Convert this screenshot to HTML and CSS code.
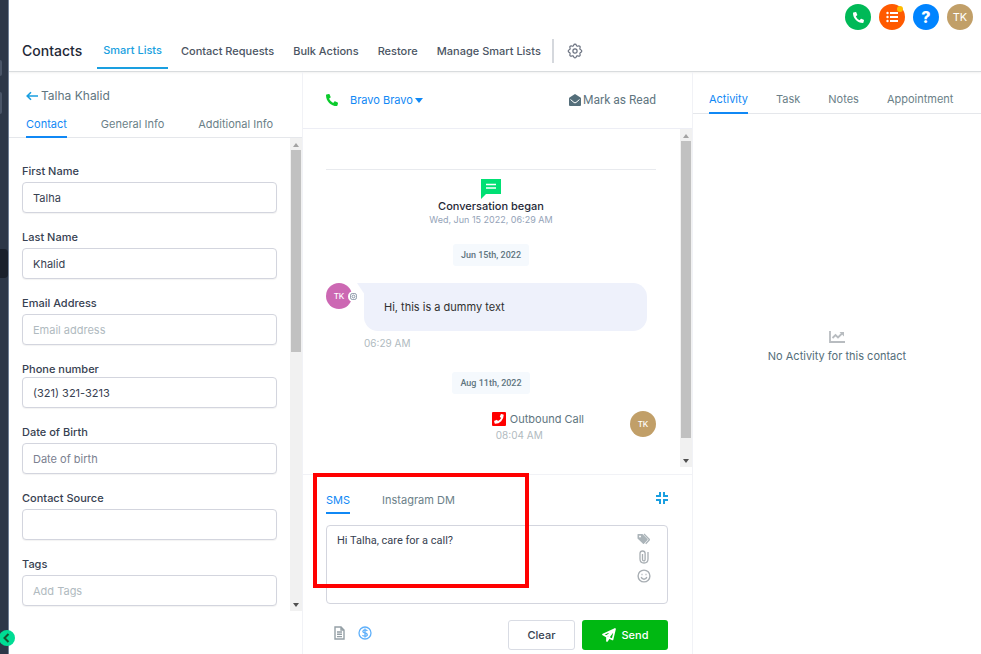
FILE: index.html
```
<!DOCTYPE html>
<html lang="en">
<head>
  <meta charset="UTF-8" />
  <meta name="viewport" content="width=device-width, initial-scale=1.0" />
  <title>Contacts</title>
  <link rel="stylesheet" href="styles.css">
</head>
<body>
  <aside class="sidebar">
    <span class="side-avatar"></span>
    <span class="side-search"></span>
    <span class="side-active"></span>
    <button class="side-toggle" aria-label="Toggle sidebar">
      <svg viewBox="0 0 16 16" width="16" height="16"><path d="M9.500 4 5.500 8l4 4" fill="none" stroke="#14532d" stroke-width="2"/></svg>
    </button>
  </aside>

  <div class="app">
    <header class="header">
      <div class="top-icons">
        <button class="circle green" aria-label="Call">
          <svg viewBox="0 0 512 512" width="11" height="11"><path fill="#fff" d="M497.390 361.800l-112-48a24 24 0 0 0-28 6.900l-49.600 60.600A370.660 370.660 0 0 1 130.600 204.110l60.600-49.600a23.940 23.940 0 0 0 6.900-28l-48-112A24.160 24.160 0 0 0 122.600.61l-104 24A24 24 0 0 0 0 48c0 256.500 207.900 464 464 464a24 24 0 0 0 23.400-18.600l24-104a24.290 24.290 0 0 0-14.010-27.600z"/></svg>
        </button>
        <button class="circle orange" aria-label="Tasks">
          <svg viewBox="0 0 14 12" width="14" height="12" fill="#fff"><circle cx="2.500" cy="2" r="1.200"/><circle cx="2.500" cy="6" r="1.200"/><circle cx="2.500" cy="10" r="1.200"/><path d="M5 1h8v2H5zM5 5h8v2H5zM5 9h8v2H5z"/></svg>
          <span class="dot"></span>
        </button>
        <button class="circle blue" aria-label="Help">?</button>
        <button class="circle tan">TK</button>
      </div>
      <nav class="main-nav">
        <h1>Contacts</h1>
        <a href="#" class="active">Smart Lists</a>
        <a href="#">Contact Requests</a>
        <a href="#">Bulk Actions</a>
        <a href="#">Restore</a>
        <a href="#">Manage Smart Lists</a>
        <button class="settings" aria-label="Settings">
          <svg viewBox="0 0 24 24" width="18" height="18" fill="none" stroke="#6b7280" stroke-width="1.600" stroke-linejoin="round"><path d="M10.300 4.300c.4-1.800 3-1.800 3.400 0a1.700 1.700 0 0 0 2.600 1.100c1.500-1 3.300.8 2.400 2.400a1.700 1.700 0 0 0 1 2.500c1.800.5 1.800 3 0 3.500a1.700 1.700 0 0 0-1 2.500c.9 1.600-.9 3.300-2.400 2.400a1.700 1.700 0 0 0-2.600 1c-.4 1.800-3 1.800-3.400 0a1.700 1.700 0 0 0-2.600-1c-1.500.9-3.300-.8-2.400-2.400a1.700 1.700 0 0 0-1-2.500c-1.800-.5-1.800-3 0-3.500a1.700 1.700 0 0 0 1-2.500c-.9-1.600.9-3.400 2.400-2.400a1.700 1.700 0 0 0 2.600-1.100z"/><circle cx="12" cy="12" r="2.800"/></svg>
        </button>
      </nav>
    </header>

    <main class="columns">
      <section class="contact">
        <div class="contact-head">
          <a href="#" class="back">
            <svg viewBox="0 0 12 10" width="12" height="10"><path d="M12 5H1.500M5 1.200 1.200 5 5 8.800" fill="none" stroke="#1a9fe0" stroke-width="1.600"/></svg>
            <span>Talha Khalid</span>
          </a>
          <nav class="tabs contact-tabs">
            <a href="#" class="active">Contact</a>
            <a href="#">General Info</a>
            <a href="#">Additional Info</a>
          </nav>
        </div>
        <div class="contact-body">
          <form class="fields">
            <div class="field"><label for="first">First Name</label><input id="first" type="text" value="Talha"></div>
            <div class="field"><label for="last">Last Name</label><input id="last" type="text" value="Khalid"></div>
            <div class="field"><label for="email">Email Address</label><input id="email" type="email" placeholder="Email address"></div>
            <div class="field tight"><label for="phone">Phone number</label><input id="phone" type="tel" value="(321) 321-3213"></div>
            <div class="field dark"><label for="dob">Date of Birth</label><input id="dob" type="text" placeholder="Date of birth"></div>
            <div class="field"><label for="source">Contact Source</label><input id="source" type="text"></div>
            <div class="field"><label for="tags">Tags</label><input id="tags" type="text" placeholder="Add Tags"></div>
          </form>
          <div class="scrollbar"><i class="up"></i><b class="thumb-form"></b><i class="down"></i></div>
        </div>
      </section>

      <section class="conversation">
        <div class="conv-head">
          <svg viewBox="0 0 512 512" width="12" height="12"><path fill="#0acb2c" d="M497.390 361.800l-112-48a24 24 0 0 0-28 6.900l-49.600 60.600A370.660 370.660 0 0 1 130.600 204.110l60.600-49.600a23.940 23.940 0 0 0 6.900-28l-48-112A24.160 24.160 0 0 0 122.600.61l-104 24A24 24 0 0 0 0 48c0 256.500 207.900 464 464 464a24 24 0 0 0 23.400-18.600l24-104a24.290 24.290 0 0 0-14.010-27.600z"/></svg>
          <button class="person">Bravo Bravo <span class="caret"></span></button>
          <button class="mark-read">
            <svg viewBox="0 0 12 12" width="12" height="12"><path fill="#546e7a" d="M6 0 .5 3.600Q0 4 0 4.500V11q0 1 1 1h10q1 0 1-1V4.500q0-.5-.5-.9z"/><path d="m1.500 5.500 3.500 3q1 .7 2 0l3.500-3" fill="none" stroke="#fff"/></svg>
            Mark as Read
          </button>
        </div>

        <div class="thread-wrap">
          <div class="thread">
            <hr>
            <div class="began">
              <svg viewBox="0 0 20 20" width="20" height="20"><path fill="#00e074" d="M0 0h20v15H5l-5 5z"/><path d="M5 5.500h10M5 9h10" stroke="#fff" stroke-width="1.400"/></svg>
              <strong>Conversation began</strong>
              <time>Wed, Jun 15 2022, 06:29 AM</time>
            </div>
            <span class="date">Jun 15th, 2022</span>
            <div class="incoming">
              <div class="avatar pink">TK
                <span class="channel"><svg viewBox="0 0 10 10" width="7" height="7" fill="none" stroke="#64748b"><rect x=".8" y=".8" width="8.400" height="8.400" rx="2.400"/><circle cx="5" cy="5" r="2"/></svg></span>
              </div>
              <div class="bubble-wrap">
                <p class="bubble">Hi, this is a dummy text</p>
                <time>06:29 AM</time>
              </div>
            </div>
            <span class="date second">Aug 11th, 2022</span>
            <div class="outgoing">
              <div class="call">
                <p>
                  <svg viewBox="0 0 14 14" width="14" height="14"><rect width="14" height="14" rx="1" fill="red"/><path fill="#fff" d="m9.300 2.100 2 .5q.4.100.4.500 0 3.600-2.500 6.100T3.100 11.700q-.4 0-.5-.4l-.5-2q0-.4.300-.5l2.200-.9q.3-.1.500.1l.9 1.100q2.200-1 3.100-3.100L8 5.100q-.3-.3-.1-.6l.9-2.200q.2-.3.500-.2z"/></svg>
                  Outbound Call
                </p>
                <time>08:04 AM</time>
              </div>
              <div class="avatar tan">TK</div>
            </div>
          </div>
          <div class="scrollbar"><i class="up"></i><b class="thumb-thread"></b><i class="down"></i></div>
        </div>

        <div class="composer">
          <div class="composer-top">
            <nav class="tabs composer-tabs">
              <a href="#" class="active">SMS</a>
              <a href="#">Instagram DM</a>
            </nav>
            <button class="icon-btn" aria-label="Collapse">
              <svg viewBox="0 0 12 12" width="12" height="12"><path d="M0 4h4V0M8 0v4h4M12 8H8v4M4 12V8H0" fill="none" stroke="#1a9fe0" stroke-width="2"/></svg>
            </button>
          </div>
          <div class="message-box">
            <textarea aria-label="Message">Hi Talha, care for a call?</textarea>
            <div class="tools">
              <button class="icon-btn" aria-label="Tags"><svg viewBox="0 0 14 12" width="14" height="12" fill="#abb4b9"><path d="M1 1h4.500l5 5q.5.500 0 1l-3.500 3.700q-.5.500-1 0L.5 5.500V1.500Q.5 1 1 1z"/><path d="m7 1 5.200 5.200q.4.400 0 .8l-3.500 3.700" fill="none" stroke="#abb4b9" stroke-width="1.300"/><circle cx="3" cy="3.500" r="1" fill="#fff"/></svg></button>
              <button class="icon-btn" aria-label="Attach"><svg viewBox="0 0 10 14" width="10" height="14" fill="none" stroke="#a8aeb3" stroke-width="1.300"><path d="M3.500 4v5.500q0 1.300 1.300 1.300T6.100 9.500V3.300Q6.100 1 3.600 1T1 3.300V9q0 4 4 4t4-4V2"/></svg></button>
              <button class="icon-btn" aria-label="Emoji"><svg viewBox="0 0 14 14" width="14" height="14" fill="none" stroke="#a8aeb3" stroke-width="1.400"><circle cx="7" cy="7" r="5.900"/><path d="M4.200 8q.6 2.200 2.800 2.200T9.800 8M4.500 5.500h1M8.500 5.500h1"/></svg></button>
            </div>
          </div>
          <div class="actions">
            <button class="icon-btn" aria-label="Template"><svg viewBox="0 0 11 14" width="11" height="14" fill="none" stroke="#95a0a6" stroke-width="1.400"><path d="M1 1h6l3 3v9H1zM7 1v3h3M3 6h5M3 8.300h5M3 10.600h5"/></svg></button>
            <button class="icon-btn" aria-label="Request payment"><svg viewBox="0 0 14 14" width="14" height="14" fill="none" stroke="#5fb0fa" stroke-width="1.300"><circle cx="7" cy="7" r="6"/><path d="M9.300 5q-.4-1.200-2.300-1.200T4.800 5.300Q4.800 6.600 7 7t2.300 1.700Q9.300 10.200 7 10.200T4.600 9M7 2.500v9"/></svg></button>
            <button class="clear">Clear</button>
            <button class="send">
              <svg viewBox="0 0 14 14" width="14" height="14" fill="none" stroke="#fff" stroke-width="1.700" stroke-linejoin="round"><path d="M13 1 1 6.500l3.500 2L13 1l-2.500 10.500-4-2L13 1M5 9v4l2-3"/></svg>
              Send
            </button>
          </div>
          <div class="highlight"></div>
        </div>
      </section>

      <section class="activity">
        <nav class="tabs activity-tabs">
          <a href="#" class="active">Activity</a>
          <a href="#">Task</a>
          <a href="#">Notes</a>
          <a href="#">Appointment</a>
        </nav>
        <div class="empty">
          <svg viewBox="0 0 16 12" width="16" height="12" fill="none" stroke="#b8bcc0" stroke-width="1.800"><path d="M1 0v11h15M3.500 7l3-3L9 6.500l4-4"/><path d="M10.500 1H15v4.500z" fill="#b8bcc0" stroke="none"/></svg>
          <p>No Activity for this contact</p>
        </div>
      </section>
    </main>
  </div>
</body>
</html>
```

FILE: styles.css
```
* {
  box-sizing: border-box;
}

body {
  margin: 0;
  display: flex;
  min-height: 100vh;
  font-family: Inter, sans-serif;
  font-size: 11px;
  line-height: 16px;
  color: #374151;
  background: #fff;
}

h1, p, hr {
  margin: 0;
}

a {
  color: inherit;
  text-decoration: none;
}

button {
  padding: 0;
  border: none;
  background: none;
  font: inherit;
  color: inherit;
  cursor: pointer;
}

svg {
  display: block;
  flex: none;
}

/* sidebar */
.sidebar {
  position: relative;
  flex: none;
  width: 9px;
  display: flex;
  flex-direction: column;
  background: #2d3748;
  border-right: 1px solid #718096;
}

.side-avatar {
  width: 2px;
  height: 16px;
  margin-top: 60px;
  border-radius: 0 4px 4px 0;
  background: #4a5568;
}

.side-search {
  width: 2px;
  height: 22px;
  margin-top: 16px;
  border-radius: 0 2px 2px 0;
  background: #4a5568;
}

.side-active {
  height: 29px;
  margin-top: 135px;
  border-radius: 0 4px 4px 0;
  background: #1a202c;
}

.side-toggle {
  position: absolute;
  left: -1px;
  bottom: 8px;
  width: 16px;
  height: 16px;
  border-radius: 50%;
  background: #00dc94;
}

.app {
  flex: 1;
  min-width: 0;
  display: flex;
  flex-direction: column;
}

/* header */
.header {
  border-bottom: 1px solid #d9dcde;
  box-shadow: 0 1px 2px rgba(0,0,0,0.06);
}

.top-icons {
  display: flex;
  justify-content: flex-end;
  gap: 8px;
  padding: 4px 8px 0;
}

.circle {
  position: relative;
  display: flex;
  align-items: center;
  justify-content: center;
  width: 26px;
  height: 26px;
  border-radius: 50%;
  color: #fff;
}

.green { background: #00b957; }
.orange { background: #ff5a00; }
.blue { background: #0084ff; font-size: 16px; font-weight: 800; }
.tan { background: #c19f68; }
.pink { background: #cc68b3; }

.dot {
  position: absolute;
  top: 2px;
  right: 2px;
  width: 6px;
  height: 6px;
  border-radius: 50%;
  background: #ffbc00;
}

.main-nav {
  display: flex;
  align-items: center;
  gap: 19px;
  height: 41px;
  padding-left: 13px;
  font-weight: 500;
  color: #4b5563;
}

.main-nav h1 {
  font-size: 14px;
  font-weight: 500;
  color: #1f2937;
}

.main-nav .active {
  align-self: stretch;
  margin: 0 -6px 2px -4px;
  padding: 12px 6px 0;
  color: #1a9fe0;
  border-bottom: 2px solid #1a9fe0;
}

.settings {
  margin-left: -8px;
  padding: 3px 0 3px 12px;
  border-left: 2px solid #d5d8dd;
}

/* columns */
.columns {
  flex: 1;
  display: grid;
  grid-template-columns: 293px 1fr 288px;
}

.tabs {
  display: flex;
  color: #6b7f88;
}

.tabs .active {
  color: #1088f5;
  border-bottom: 2px solid #1088f5;
}

.contact-head {
  padding: 16px 17px 0;
  border-bottom: 1px solid #e5e7eb;
}

.back {
  display: flex;
  align-items: center;
  gap: 3px;
  font-size: 12px;
  color: #607580;
}

.contact-tabs {
  gap: 34px;
  margin-bottom: -1px;
  padding-top: 12px;
}

.contact-tabs a {
  height: 22px;
}

.contact-body {
  display: flex;
}

.fields {
  flex: 1;
  padding: 25px 13px 5px;
  display: flex;
  flex-direction: column;
  gap: 16px;
}

.field {
  display: flex;
  flex-direction: column;
  gap: 3px;
}

.field.tight {
  gap: 0;
}

.field label {
  font-weight: 500;
}

.field input {
  height: 31px;
  padding: 0 10px;
  border: 1px solid #d3d5de;
  border-radius: 4px;
  font: inherit;
  color: #374151;
  box-shadow: 0 1px 1px rgba(0,0,0,0.05);
}

.field input::placeholder {
  color: #b0bac0;
}

.field.dark input::placeholder {
  color: #7b8190;
}

.scrollbar {
  flex: none;
  width: 12px;
  display: flex;
  flex-direction: column;
  align-items: center;
  background: #f1f1f1;
}

.scrollbar .up,
.scrollbar .down {
  border: 3px solid transparent;
}

.scrollbar .up {
  margin: 2px 0 3px;
  border-bottom: 4px solid #a3a3a3;
}

.scrollbar .down {
  margin: auto 0 1px;
  border-top: 4px solid #505050;
}

.scrollbar b {
  width: 10px;
  background: #c1c1c1;
}

.thumb-form {
  height: 202px;
}

.thumb-thread {
  height: 297px;
}

/* conversation */
.conversation {
  display: flex;
  flex-direction: column;
  border: solid #f1f2f6;
  border-width: 0 1px;
}

.conv-head {
  display: flex;
  align-items: center;
  height: 57px;
  padding: 0 36px 0 23px;
  border-bottom: 1px solid #edeef5;
}

.person {
  display: flex;
  align-items: center;
  gap: 2px;
  margin-left: 12px;
  color: #1088f5;
}

.caret {
  border: 4px solid transparent;
  border-top: 5px solid #1088f5;
  border-bottom: 0;
}

.mark-read {
  display: flex;
  align-items: center;
  gap: 2px;
  margin-left: auto;
  font-family: Roboto, sans-serif;
  font-size: 12px;
  color: #607580;
}

.thread-wrap {
  flex: 1;
  display: flex;
  margin-bottom: 7px;
}

.thread {
  flex: 1;
  display: flex;
  flex-direction: column;
  align-items: center;
  padding: 40px 24px 0 23px;
}

.thread hr {
  width: 100%;
  border: none;
  border-top: 1px solid #e8eaee;
}

.thread time {
  font-size: 10px;
  color: #b0bac0;
}

.began {
  display: flex;
  flex-direction: column;
  align-items: center;
  padding-top: 9px;
  line-height: 14px;
}

.began strong {
  font-weight: 500;
  color: #1f2937;
}

.thread .began time {
  font-size: 9px;
  color: #94a3b8;
}

.date {
  margin-top: 17px;
  padding: 3px 8px;
  border-radius: 3px;
  background: #f5f9fd;
  font: 500 9px/16px Roboto, sans-serif;
  color: #607580;
}

.date.second {
  margin-top: 21px;
}

.incoming {
  align-self: stretch;
  display: flex;
  gap: 12px;
  padding: 17px 9px 0 0;
}

.avatar {
  position: relative;
  flex: none;
  width: 26px;
  height: 26px;
  border-radius: 50%;
  text-align: center;
  font-size: 8px;
  font-weight: 500;
  line-height: 26px;
  color: #fff;
}

.channel {
  position: absolute;
  right: -7px;
  top: 8px;
  display: flex;
  align-items: center;
  justify-content: center;
  width: 11px;
  height: 11px;
  border-radius: 50%;
  background: #fff;
}

.bubble-wrap {
  flex: 1;
}

.bubble {
  position: relative;
  padding: 16px 20px;
  border-radius: 0 14px 14px 14px;
  background: #eef1fb;
  color: #303030;
}

.bubble::before {
  content: "";
  position: absolute;
  left: -7px;
  top: 0;
  border-top: 12px solid #eef1fb;
  border-left: 8px solid transparent;
}

.bubble-wrap time {
  display: block;
  padding-top: 4px;
}

.outgoing {
  align-self: flex-end;
  display: flex;
  gap: 46px;
  padding-top: 17px;
}

.call p {
  display: flex;
  align-items: center;
  gap: 4px;
  color: #607580;
}

.call time {
  display: block;
  padding-left: 4px;
}

/* composer */
.composer {
  position: relative;
  padding: 17px 24px 4px 23px;
  border-top: 1px solid #f1f2f6;
}

.composer-top {
  display: flex;
  align-items: flex-start;
  justify-content: space-between;
}

.composer-tabs {
  gap: 32px;
}

.composer-tabs a {
  height: 22px;
}

.icon-btn {
  display: flex;
  align-items: center;
  justify-content: center;
}

.message-box {
  display: flex;
  height: 79px;
  margin-top: 11px;
  border: 1px solid #d3d5de;
  border-radius: 4px;
}

.message-box textarea {
  flex: 1;
  min-width: 0;
  padding: 7px 10px;
  border: none;
  outline: none;
  resize: none;
  background: none;
  font: 11px/16px Roboto, sans-serif;
  color: #374151;
}

.tools {
  display: flex;
  flex-direction: column;
  align-items: center;
  gap: 5px;
  padding: 7px 16px;
}

.actions {
  display: flex;
  align-items: center;
  margin-top: 16px;
  padding-left: 8px;
  font-weight: 500;
}

.actions .icon-btn {
  margin: 0 13px 4px 0;
}

.clear, .send {
  height: 30px;
  border-radius: 3px;
}

.clear {
  width: 67px;
  margin-left: auto;
  border: 1px solid #d9dce4;
}

.send {
  display: flex;
  align-items: center;
  justify-content: center;
  gap: 6px;
  width: 86px;
  margin-left: 7px;
  background: #00b812;
  color: #fff;
}

.highlight {
  position: absolute;
  left: 10px;
  top: -2px;
  width: 216px;
  height: 115px;
  border: 4px solid #f00;
  pointer-events: none;
}

/* activity */
.activity {
  display: flex;
  flex-direction: column;
}

.activity-tabs {
  gap: 28px;
  padding: 19px 16px 0;
  border-bottom: 1px solid #e5e7eb;
}

.activity-tabs a {
  height: 23px;
  margin-bottom: -1px;
}

.empty {
  display: flex;
  flex-direction: column;
  align-items: center;
  gap: 5px;
  margin-top: 217px;
  color: #546e7a;
}
```
